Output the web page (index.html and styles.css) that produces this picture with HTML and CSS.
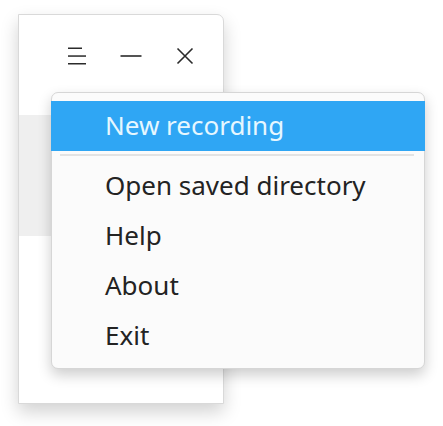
FILE: index.html
```html
<!DOCTYPE html>
<html>
<head>
<meta charset="utf-8">
<link rel="stylesheet" href="styles.css">
</head>
<body>
<div class="desktop">
  <div class="window">
    <div class="titlebar">
      <span class="icon icon-menu">
        <svg width="18" height="18" viewBox="0 0 18 18"><rect x="0" y="0.5" width="14" height="1.5" fill="#2b2b2b"/><rect x="0" y="8.3" width="18" height="1.5" fill="#2b2b2b"/><rect x="0" y="16" width="18" height="1.5" fill="#2b2b2b"/></svg>
      </span>
      <span class="icon icon-min">
        <svg width="22" height="4" viewBox="0 0 22 4"><rect x="0.5" y="1.2" width="21" height="1.6" fill="#2b2b2b"/></svg>
      </span>
      <span class="icon icon-close">
        <svg width="18" height="18" viewBox="0 0 18 18"><path d="M1.5 1.5l15 15M16.5 1.5l-15 15" stroke="#2b2b2b" stroke-width="1.6" fill="none"/></svg>
      </span>
    </div>
    <div class="content"></div>
  </div>
  <div class="menu">
    <div class="item active">New recording</div>
    <div class="separator"></div>
    <div class="item">Open saved directory</div>
    <div class="item">Help</div>
    <div class="item">About</div>
    <div class="item">Exit</div>
  </div>
</div>
</body>
</html>
```
FILE: styles.css
```css
html, body {
  margin: 0;
  padding: 0;
  background: #ffffff;
  font-family: "Noto Sans", "Open Sans", sans-serif;
}
.desktop {
  position: relative;
  width: 443px;
  height: 426px;
  overflow: hidden;
  padding-top: 14px;
  padding-left: 18px;
  box-sizing: border-box;
}
.window {
  width: 206px;
  height: 390px;
  box-sizing: border-box;
  border: 1px solid #d9d9d9;
  border-top-right-radius: 7px;
  background: #ffffff;
  box-shadow: 0 8px 18px rgba(0,0,0,0.18);
  display: flex;
  flex-direction: column;
}
.titlebar {
  height: 100px;
  display: flex;
  align-items: center;
  padding-left: 49px;
  padding-bottom: 18px;
  box-sizing: border-box;
}
.icon { display: flex; align-items: center; justify-content: center; }
.icon svg { display: block; }
.icon-menu { width: 18px; height: 18px; }
.icon-min { width: 22px; margin-left: 34px; }
.icon-close { width: 18px; height: 18px; margin-left: 34px; }
.content {
  height: 121px;
  background: #efefef;
}
.menu {
  position: absolute;
  left: 51px;
  top: 92px;
  width: 374px;
  height: 277px;
  box-sizing: border-box;
  border: 1px solid #d6d6d6;
  border-radius: 7px;
  background: #fbfbfb;
  box-shadow: 0 6px 14px rgba(0,0,0,0.2);
  padding: 8px 0 8px 0;
}
.item {
  height: 50px;
  line-height: 48px;
  font-size: 26px;
  color: #232323;
  padding-left: 53px;
}
.item.active {
  background: #2fa6f4;
  color: #e6f7ff;
  margin: 0 -1px;
  padding-left: 54px;
}
.separator {
  height: 2px;
  background: #e3e3e3;
  margin: 3px 10px 5px 8px;
}
```
